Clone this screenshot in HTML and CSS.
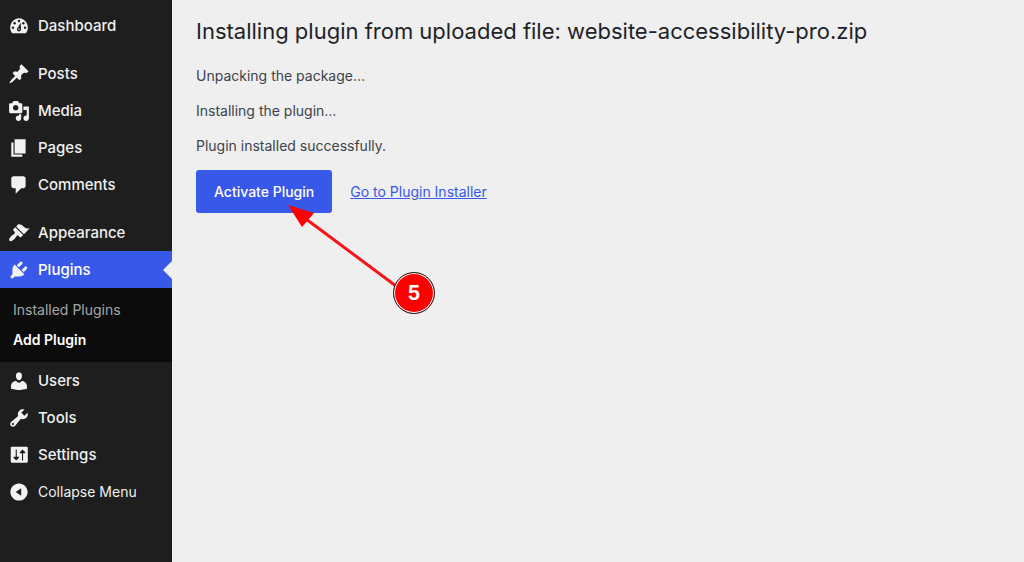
FILE: index.html
```html
<!DOCTYPE html>
<html lang="en">
<head>
  <meta charset="UTF-8" />
  <meta name="viewport" content="width=device-width, initial-scale=1.0" />
  <title>Install Plugin</title>
  <link rel="stylesheet" href="styles.css">
</head>
<body>

  <!-- Admin menu -->
  <nav class="sidebar">
    <a class="menu-item" href="#">
      <svg class="icon" viewBox="0 0 20 20"><path d="M3.800 16.500h12.400c1.100-1.400 1.800-3.100 1.800-5 0-4.400-3.600-8.500-8-8.500s-8 4.100-8 8.500c0 1.900.7 3.600 1.800 5z"/><g class="cut"><circle cx="10" cy="5.500" r="1.100"/><circle cx="6" cy="7.500" r="1.100"/><circle cx="14" cy="7.500" r="1.100"/><circle cx="4.500" cy="11.500" r="1.100"/><circle cx="15.500" cy="11.500" r="1.100"/><path d="M11.500 6.800l.4 6.200c0 1.100-.8 2-1.900 2s-1.900-.9-1.900-2c0-.8.4-1.300 1-1.700z"/></g><circle cx="10" cy="13" r=".7"/></svg>
      Dashboard
    </a>
    <div class="separator"></div>
    <a class="menu-item" href="#">
      <svg class="icon" viewBox="0 0 20 20"><path d="M10.440 3.020l1.820-1.820 6.360 6.350-1.830 1.820c-1.050-.68-2.480-.57-3.410.36l-.75.75c-.92.93-1.040 2.350-.35 3.410l-1.830 1.820-2.410-2.410-2.800 2.790c-.42.42-3.380 2.710-3.800 2.290s1.860-3.390 2.280-3.810l2.790-2.790L4.100 9.360l1.830-1.820c1.050.69 2.480.57 3.400-.36l.75-.75c.93-.92 1.050-2.350.36-3.410z"/></svg>
      Posts
    </a>
    <a class="menu-item" href="#">
      <svg class="icon" viewBox="0 0 20 20"><path d="M13 11V4c0-.55-.45-1-1-1h-1.670L9 1H5L3.670 3H2c-.55 0-1 .45-1 1v7c0 .55.45 1 1 1h10c.55 0 1-.45 1-1zM7 4.500c1.380 0 2.500 1.120 2.500 2.500S8.380 9.500 7 9.500 4.500 8.380 4.500 7 5.620 4.500 7 4.500zM14 6h5v10.500c0 1.380-1.120 2.500-2.500 2.500S14 17.880 14 16.500s1.120-2.500 2.500-2.500c.17 0 .34.02.5.05V9h-3V6zm-4 8.050V13h2v3.500c0 1.380-1.120 2.500-2.500 2.500S7 17.880 7 16.500 8.120 14 9.500 14c.17 0 .34.02.5.05z"/></svg>
      Media
    </a>
    <a class="menu-item" href="#">
      <svg class="icon" viewBox="0 0 20 20"><path d="M6 15V2h10v13H6zm-1 1h8v2H3V5h2v11z"/></svg>
      Pages
    </a>
    <a class="menu-item" href="#">
      <svg class="icon" viewBox="0 0 20 20"><path d="M5 2h9c1.100 0 2 .9 2 2v7c0 1.100-.9 2-2 2h-2l-5 5v-5H5c-1.100 0-2-.9-2-2V4c0-1.100.9-2 2-2z"/></svg>
      Comments
    </a>
    <div class="separator"></div>
    <a class="menu-item" href="#">
      <svg class="icon" viewBox="0 0 20 20"><path d="M14.480 11.060L7.410 3.990l1.500-1.500c.5-.56 2.300-.47 3.510.32 1.210.8 1.430 1.280 2.910 2.100 1.180.64 2.450 1.260 4.450.85zm-.71.71L6.700 4.700 4.930 6.470c-.39.39-.39 1.020 0 1.410l1.060 1.060c.39.39.39 1.030 0 1.420-.6.6-1.430 1.110-2.210 1.690-.35.26-.7.53-1.010.84C1.430 14.230.4 16.080 1.400 17.070c.99 1 2.840-.03 4.180-1.360.31-.31.58-.66.85-1.020.57-.78 1.080-1.610 1.690-2.210.39-.39 1.020-.39 1.410 0l1.060 1.060c.39.39 1.020.39 1.410 0z"/></svg>
      Appearance
    </a>
    <a class="menu-item current" href="#">
      <svg class="icon" viewBox="0 0 20 20"><path d="M13.110 4.360L9.870 7.600 8 5.730l3.240-3.240c.35-.34 1.050-.2 1.560.32.52.51.66 1.210.31 1.550zm-8 1.770l.91-1.120 9.010 9.010-1.190.84c-.71.71-2.630 1.160-3.820 1.160H6.140L4.900 17.260c-.59.59-1.540.59-2.120 0-.59-.58-.59-1.530 0-2.120l1.240-1.240v-3.880c0-1.130.4-3.190 1.090-3.890zm7.260 3.970l3.240-3.240c.34-.35 1.040-.21 1.550.31.52.51.66 1.210.31 1.550l-3.240 3.250z"/></svg>
      Plugins
    </a>
    <div class="submenu">
      <a href="#">Installed Plugins</a>
      <a class="active" href="#">Add Plugin</a>
    </div>
    <a class="menu-item" href="#">
      <svg class="icon" viewBox="0 0 20 20"><path d="M10 9.250c-2.270 0-2.730-3.440-2.730-3.440C7 4.020 7.820 2 9.970 2c2.160 0 2.980 2.020 2.710 3.810 0 0-.41 3.440-2.680 3.440zm0 2.570L12.720 10c2.390 0 4.520 2.330 4.520 4.530v2.490s-3.650 1.130-7.240 1.130c-3.650 0-7.240-1.130-7.240-1.130v-2.490c0-2.250 1.940-4.480 4.470-4.480z"/></svg>
      Users
    </a>
    <a class="menu-item" href="#">
      <svg class="icon" viewBox="0 0 20 20"><path d="M16.680 9.770c-1.340 1.340-3.300 1.670-4.950.99l-5.410 6.520c-.99.99-2.590.99-3.580 0s-.99-2.590 0-3.570l6.520-5.420c-.68-1.650-.35-3.610.99-4.950 1.280-1.280 3.120-1.620 4.720-1.060l-2.890 2.890 2.820 2.820 2.860-2.870c.53 1.580.18 3.390-1.080 4.650zM3.810 16.210c.4.39 1.040.39 1.430 0 .4-.4.4-1.040 0-1.430-.39-.4-1.030-.4-1.430 0-.39.39-.39 1.030 0 1.430z"/></svg>
      Tools
    </a>
    <a class="menu-item" href="#">
      <svg class="icon" viewBox="0 0 20 20"><rect x="2.500" y="2.500" width="15.500" height="14.500" rx="1"/><g class="cut"><path d="M7 5h1v6.500h2v1L7.500 15 5 12.500v-1h2z"/><path d="M12.700 15h1V8.500h2v-1L13.200 5l-2.500 2.500v1h2z"/></g></svg>
      Settings
    </a>
    <button class="menu-item collapse" type="button">
      <svg class="icon" viewBox="0 0 20 20"><path d="M10 2.160c4.330 0 7.840 3.510 7.840 7.840s-3.510 7.840-7.840 7.840S2.160 14.330 2.160 10 5.710 2.160 10 2.160zm2 11.220V6.620L7 9.970z"/></svg>
      Collapse Menu
    </button>
  </nav>

  <!-- Install progress -->
  <main class="content">
    <h1>Installing plugin from uploaded file: website-accessibility-pro.zip</h1>
    <p>Unpacking the package…</p>
    <p>Installing the plugin…</p>
    <p>Plugin installed successfully.</p>
    <div class="actions">
      <button class="button-primary" type="button">Activate Plugin</button>
      <a href="#">Go to Plugin Installer</a>

      <!-- Step marker -->
      <div class="callout">
        <svg class="arrow" viewBox="0 0 110 84"><path class="shaft" d="M14 11L108 81"/><path class="head" d="M0 0L26 8L14 22z"/></svg>
        <span class="step">5</span>
      </div>
    </div>
  </main>

</body>
</html>
```
FILE: styles.css
```css
* { margin: 0; padding: 0; box-sizing: border-box; }

body {
  display: flex;
  min-height: 100vh;
  font-family: Inter, sans-serif;
  font-size: 14px;
  color: #3c434a;
  background: #efefef;
}

.sidebar {
  flex: 0 0 172px;
  padding-top: 7px;
  background: #1e1e1e;
}

.menu-item {
  position: relative;
  display: flex;
  align-items: center;
  gap: 8px;
  width: 100%;
  height: 37px;
  padding-left: 8px;
  font-size: 15px;
  font-weight: 500;
  color: #f0f0f0;
  text-decoration: none;
}

.icon {
  width: 22px;
  height: 22px;
  fill: #f3f1f1;
}

.icon .cut { fill: #1e1e1e; }

.separator { height: 11px; }

.current {
  color: #fff;
  background: #3858e9;
}

.current::after {
  content: "";
  position: absolute;
  top: 50%;
  right: 0;
  border: 9px solid transparent;
  border-right-color: #efefef;
  border-left-width: 0;
  transform: translateY(-50%);
}

.submenu {
  padding: 7px 0;
  background: #0c0c0c;
}

.submenu a {
  display: block;
  padding-left: 13px;
  font-size: 14px;
  line-height: 30px;
  color: #a7a7a7;
  text-decoration: none;
}

.submenu .active {
  font-weight: 600;
  color: #fff;
}

.collapse {
  border: none;
  background: none;
  font-family: inherit;
  font-size: 14px;
  font-weight: 400;
  cursor: pointer;
}

.content {
  flex: 1;
  padding: 14px 24px;
}

h1 {
  margin-bottom: 14px;
  font-size: 22px;
  font-weight: 400;
  line-height: 34px;
  color: #1d2327;
}

.content p {
  margin-bottom: 7px;
  line-height: 28px;
}

.actions {
  position: relative;
  display: flex;
  align-items: center;
  gap: 18px;
  margin-top: 10px;
}

.actions a { color: #3858e9; }

.button-primary {
  height: 43px;
  padding: 0 18px;
  border: none;
  border-radius: 3px;
  background: #3858e9;
  font-family: inherit;
  font-size: 14px;
  font-weight: 500;
  color: #fff;
  cursor: pointer;
}

/* Arrow and number sit over the button */
.callout {
  position: absolute;
  top: 35px;
  left: 92px;
  width: 147px;
  height: 109px;
  pointer-events: none;
}

.arrow {
  width: 110px;
  height: 84px;
}

.shaft {
  stroke: #f5141a;
  stroke-width: 3;
}

.head { fill: #f00; }

.step {
  position: absolute;
  right: 0;
  bottom: 0;
  width: 42px;
  height: 42px;
  border: 1px solid #222;
  border-radius: 50%;
  box-shadow: inset 0 0 0 1px #fff;
  background: #f00;
  font-size: 20px;
  font-weight: 700;
  line-height: 40px;
  text-align: center;
  color: #fff;
}
```
